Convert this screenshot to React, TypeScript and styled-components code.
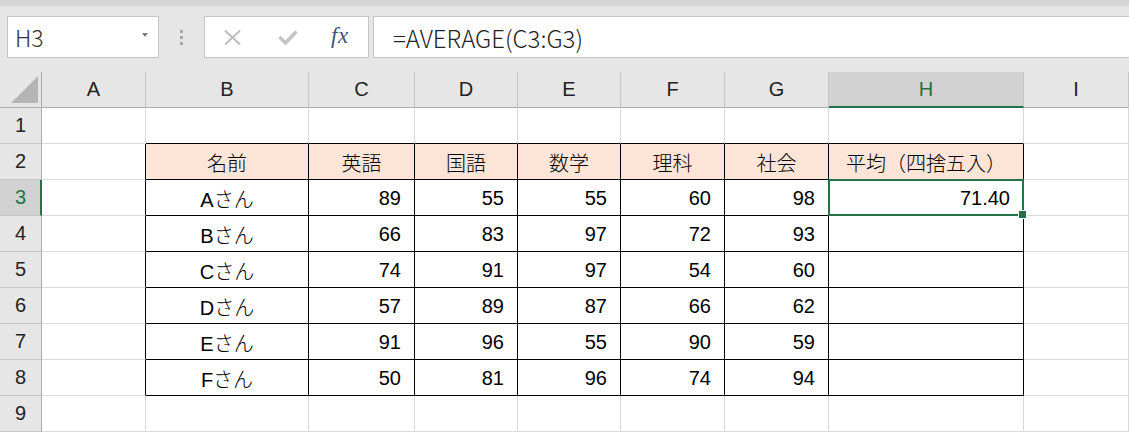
import React from 'react'
import styled, { createGlobalStyle } from 'styled-components'

const GREEN = '#217346'
const GRID = '#d9d9d9'
const HEAD_LINE = '#ababab'

const GlobalStyle = createGlobalStyle`
    html, body {
        margin: 0;
        padding: 0;
        background: #fff;
    }
    body {
        font-family: "Liberation Sans", "Noto Sans CJK JP", sans-serif;
        overflow: hidden;
    }
`

const Page = styled.div`
    width: 1129px;
    height: 433px;
    display: flex;
    flex-direction: column;
    overflow: hidden;
`

const RibbonEdge = styled.div`
    height: 6px;
    flex: none;
    background: #d5d5d5;
`

const FormulaBar = styled.div`
    height: 66px;
    flex: none;
    box-sizing: border-box;
    display: flex;
    align-items: flex-start;
    padding: 10px 0 0 7px;
    background: #e6e6e6;
`

const Box = styled.div`
    height: 42px;
    box-sizing: border-box;
    background: #fff;
    border: 1px solid #c6c6c6;
    display: flex;
    align-items: center;
`

const NameBox = styled(Box)`
    width: 152px;
    justify-content: space-between;
    padding: 0 10px 0 7px;
    font-family: "Noto Sans CJK JP", sans-serif;
    font-weight: 300;
    font-size: 23px;
    color: #333;
`

const Caret = styled.span`
    width: 0;
    height: 0;
    border-left: 3px solid transparent;
    border-right: 3px solid transparent;
    border-top: 4px solid #7a7a7a;
    margin-top: -4px;
`

const Grip = styled.div`
    width: 3px;
    height: 42px;
    margin: 0 21px;
    display: flex;
    flex-direction: column;
    justify-content: center;
    gap: 3px;

    span {
        width: 3px;
        height: 3px;
        background: #a8a8a8;
    }
`

const ButtonBox = styled(Box)`
    width: 165px;
    padding-left: 19px;
`

const IconSlot = styled.div<{ $w: number }>`
    width: ${p => p.$w}px;
    display: flex;
    align-items: center;
`

const Fx = styled.span`
    font-family: "Liberation Serif", serif;
    font-style: italic;
    font-size: 23px;
    color: #44527a;
    letter-spacing: 0.5px;
    margin-top: -3px;
`

const FormulaInput = styled(Box)`
    flex: 1;
    margin-left: 4px;
    border-right: none;
    padding-left: 19px;
    font-family: "Noto Sans CJK JP", sans-serif;
    font-weight: 300;
    font-size: 24px;
    color: #222;
`

const Sheet = styled.div`
    flex: 1;
    display: grid;
    grid-template-columns: 42px 104px 163px 106px 103px 103px 104px 104px 195px 1fr;
    grid-auto-rows: 36px;
    font-size: 20px;
    color: #000;
`

const Corner = styled.div`
    box-sizing: border-box;
    background: #e6e6e6;
    border-right: 1px solid ${HEAD_LINE};
    border-bottom: 1px solid ${HEAD_LINE};
    display: flex;
    align-items: flex-end;
    justify-content: flex-end;
    padding: 0 3px 4px 0;
`

const ColHead = styled.div<{ $active?: boolean }>`
    box-sizing: border-box;
    display: flex;
    align-items: center;
    justify-content: center;
    background: ${p => (p.$active ? '#d2d2d2' : '#e6e6e6')};
    color: ${p => (p.$active ? GREEN : '#222')};
    border-right: 1px solid #c6c6c6;
    border-bottom: ${p => (p.$active ? `2px solid ${GREEN}` : `1px solid ${HEAD_LINE}`)};
    padding-top: ${p => (p.$active ? '1px' : '0')};
`

const RowHead = styled.div<{ $active?: boolean }>`
    box-sizing: border-box;
    display: flex;
    align-items: center;
    justify-content: center;
    background: ${p => (p.$active ? '#d2d2d2' : '#e6e6e6')};
    color: ${p => (p.$active ? GREEN : '#222')};
    border-right: ${p => (p.$active ? `2px solid ${GREEN}` : `1px solid ${HEAD_LINE}`)};
    border-bottom: 1px solid #c6c6c6;
    padding-left: ${p => (p.$active ? '1px' : '0')};
`

const Cell = styled.div<{
    $align: 'left' | 'center' | 'right'
    $fill?: boolean
    $boxRight?: boolean
    $boxBottom?: boolean
}>`
    position: relative;
    box-sizing: border-box;
    display: flex;
    align-items: center;
    justify-content: ${p => (p.$align === 'right' ? 'flex-end' : p.$align === 'center' ? 'center' : 'flex-start')};
    padding: 1px 13px 0 13px;
    white-space: nowrap;
    font-weight: 300;
    background: ${p => (p.$fill ? '#fce4d6' : '#fff')};
    border-right: 1px solid ${p => (p.$boxRight ? '#000' : GRID)};
    border-bottom: 1px solid ${p => (p.$boxBottom ? '#000' : GRID)};
`

const Selection = styled.div`
    position: absolute;
    z-index: 2;
    top: -1px;
    left: -1px;
    right: -1px;
    bottom: -1px;
    border: 2px solid ${GREEN};
    pointer-events: none;
`

const FillHandle = styled.div`
    position: absolute;
    right: -5px;
    bottom: -5px;
    width: 7px;
    height: 7px;
    background: ${GREEN};
    border: 1px solid #fff;
`

const columns = ['A', 'B', 'C', 'D', 'E', 'F', 'G', 'H', 'I']
const headers = ['名前', '英語', '国語', '数学', '理科', '社会', '平均（四捨五入）']
const students: [string, number[]][] = [
    ['Aさん', [89, 55, 55, 60, 98]],
    ['Bさん', [66, 83, 97, 72, 93]],
    ['Cさん', [74, 91, 97, 54, 60]],
    ['Dさん', [57, 89, 87, 66, 62]],
    ['Eさん', [91, 96, 55, 90, 59]],
    ['Fさん', [50, 81, 96, 74, 94]],
]

const cellContent = (row: number, col: number): { text: string; align: 'left' | 'center' | 'right' } => {
    if (row === 2 && col >= 1 && col <= 7) return { text: headers[col - 1], align: 'center' }
    if (row >= 3 && row <= 8) {
        const [name, scores] = students[row - 3]
        if (col === 1) return { text: name, align: 'center' }
        if (col >= 2 && col <= 6) return { text: String(scores[col - 2]), align: 'right' }
        if (col === 7 && row === 3) return { text: '71.40', align: 'right' }
    }
    return { text: '', align: 'left' }
}

const App = () => {
    const rows = [1, 2, 3, 4, 5, 6, 7, 8, 9]
    return (
        <Page>
            <GlobalStyle />
            <RibbonEdge />
            <FormulaBar>
                <NameBox>
                    <span>H3</span>
                    <Caret />
                </NameBox>
                <Grip>
                    <span />
                    <span />
                    <span />
                </Grip>
                <ButtonBox>
                    <IconSlot $w={54}>
                        <svg width="17" height="15" viewBox="0 0 17 15">
                            <path d="M1 0.5 L16 14.5 M16 0.5 L1 14.5" stroke="#bdbdbd" strokeWidth="2" fill="none" />
                        </svg>
                    </IconSlot>
                    <IconSlot $w={53}>
                        <svg width="20" height="15" viewBox="0 0 20 15">
                            <path d="M1.5 7 L7.5 13 L18.5 1.5" stroke="#c4c4c4" strokeWidth="3.5" fill="none" />
                        </svg>
                    </IconSlot>
                    <IconSlot $w={30}>
                        <Fx>fx</Fx>
                    </IconSlot>
                </ButtonBox>
                <FormulaInput>=AVERAGE(C3:G3)</FormulaInput>
            </FormulaBar>
            <Sheet>
                <Corner>
                    <svg width="27" height="27" viewBox="0 0 27 27">
                        <polygon points="0,27 27,27 27,0" fill="#b5b5b5" />
                    </svg>
                </Corner>
                {columns.map(c => (
                    <ColHead key={c} $active={c === 'H'}>
                        {c}
                    </ColHead>
                ))}
                {rows.map(r => (
                    <React.Fragment key={r}>
                        <RowHead $active={r === 3}>{r}</RowHead>
                        {columns.map((c, ci) => {
                            const inTable = r >= 2 && r <= 8 && ci >= 1 && ci <= 7
                            const { text, align } = cellContent(r, ci)
                            const selected = r === 3 && c === 'H'
                            return (
                                <Cell
                                    key={c}
                                    $align={align}
                                    $fill={r === 2 && inTable}
                                    $boxRight={inTable || (ci === 0 && r >= 2 && r <= 8)}
                                    $boxBottom={inTable || (r === 1 && ci >= 1 && ci <= 7)}
                                >
                                    {text}
                                    {selected && (
                                        <Selection>
                                            <FillHandle />
                                        </Selection>
                                    )}
                                </Cell>
                            )
                        })}
                    </React.Fragment>
                ))}
            </Sheet>
        </Page>
    )
}

export default App
